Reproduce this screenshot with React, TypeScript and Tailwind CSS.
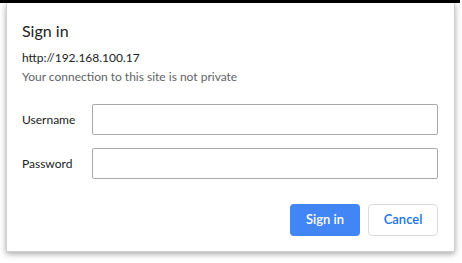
import React from "react";

export default function App() {
  return (
    <div className="relative w-[462px] h-[263px] bg-white overflow-hidden" style={{ fontFamily: 'Lato, "Noto Sans", sans-serif' }}>
      <div className="h-[3px] w-[460px] bg-black" />
      <div className="absolute left-[6px] top-[3px] w-[449px] h-[249px] bg-white border-l border-r border-b border-[#d0d0d0] shadow-[0_2px_6px_rgba(0,0,0,0.35)] flex flex-col pl-[15px] pr-[16px]">
        <div className="mt-[18px] text-[16px] leading-[20px] text-[#202124]">Sign in</div>
        <div className="mt-[9px] text-[12px] leading-[16px] text-[#202124]">http://192.168.100.17</div>
        <div className="mt-[3px] text-[12px] leading-[16px] text-[#5f6368]">Your connection to this site is not private</div>
        <div className="mt-[19px] flex items-center">
          <div className="w-[70px] text-[12px] text-[#202124]">Username</div>
          <div className="flex-1 h-[31px] border border-[#a9a9a9] rounded-[2px]" />
        </div>
        <div className="mt-[13px] flex items-center">
          <div className="w-[70px] text-[12px] text-[#202124]">Password</div>
          <div className="flex-1 h-[31px] border border-[#a9a9a9] rounded-[2px]" />
        </div>
        <div className="mt-[25px] flex justify-end gap-[8px]">
          <button className="w-[70px] h-[32px] rounded-[4px] bg-[#4285f4] text-white text-[13px] font-semibold">Sign in</button>
          <button className="w-[70px] h-[32px] rounded-[4px] border border-[#dadce0] bg-white text-[#1a73e8] text-[13px] font-semibold">Cancel</button>
        </div>
      </div>
    </div>
  );
}
